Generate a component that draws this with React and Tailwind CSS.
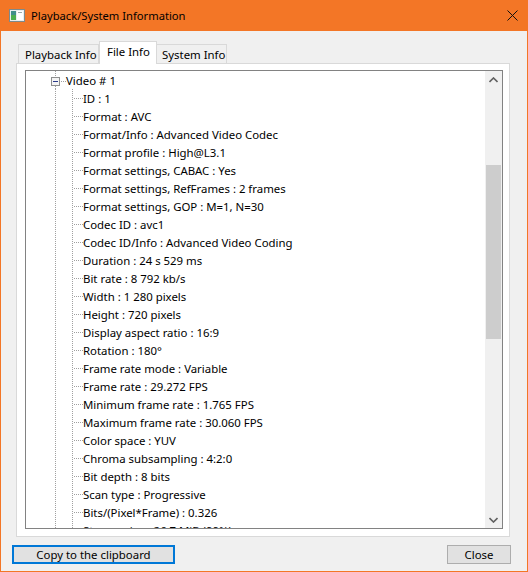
import React from "react";

const rows = [
  "ID : 1",
  "Format : AVC",
  "Format/Info : Advanced Video Codec",
  "Format profile : High@L3.1",
  "Format settings, CABAC : Yes",
  "Format settings, RefFrames : 2 frames",
  "Format settings, GOP : M=1, N=30",
  "Codec ID : avc1",
  "Codec ID/Info : Advanced Video Coding",
  "Duration : 24 s 529 ms",
  "Bit rate : 8 792 kb/s",
  "Width : 1 280 pixels",
  "Height : 720 pixels",
  "Display aspect ratio : 16:9",
  "Rotation : 180°",
  "Frame rate mode : Variable",
  "Frame rate : 29.272 FPS",
  "Minimum frame rate : 1.765 FPS",
  "Maximum frame rate : 30.060 FPS",
  "Color space : YUV",
  "Chroma subsampling : 4:2:0",
  "Bit depth : 8 bits",
  "Scan type : Progressive",
  "Bits/(Pixel*Frame) : 0.326",
  "Stream size : 26.7 MiB (99%)",
];

const dot = "#a0a0a0";

const AppIcon = () => (
  <svg width="16" height="13" viewBox="0 0 16 13" className="shrink-0">
    <rect x="0.5" y="0.5" width="15" height="12" fill="#e8eef0" stroke="#7d8a8c" />
    <rect x="2" y="2" width="5" height="9" fill="#3f8f8a" />
    <rect x="2" y="6" width="5" height="5" fill="#4caf50" />
    <rect x="8" y="2" width="6" height="9" fill="#ffffff" />
    <rect x="9" y="3" width="4" height="1" fill="#9aa" />
  </svg>
);

// tree connector for the parent node (minus box)
const ParentLines = () => (
  <svg width="40" height="18" className="shrink-0" shapeRendering="crispEdges">
    <line x1="29.5" y1="0" x2="29.5" y2="6" stroke={dot} strokeDasharray="1 1" />
    <line x1="29.5" y1="15" x2="29.5" y2="18" stroke={dot} strokeDasharray="1 1" />
    <rect x="25.5" y="6.5" width="8" height="8" fill="#f4f4f4" stroke="#8e8f8f" />
    <line x1="27" y1="10.5" x2="32" y2="10.5" stroke="#2a3a8a" />
    <line x1="35" y1="10.5" x2="40" y2="10.5" stroke={dot} strokeDasharray="1 1" />
  </svg>
);

// tree connector for child rows
const ChildLines = () => (
  <svg width="57" height="18" className="shrink-0" shapeRendering="crispEdges">
    <line x1="29.5" y1="0" x2="29.5" y2="18" stroke={dot} strokeDasharray="1 1" />
    <line x1="46.5" y1="0" x2="46.5" y2="18" stroke={dot} strokeDasharray="1 1" />
    <line x1="48" y1="9.5" x2="57" y2="9.5" stroke={dot} strokeDasharray="1 1" />
  </svg>
);

const Chevron = ({ down }) => (
  <svg width="9" height="6" viewBox="0 0 9 6" className={down ? "rotate-180" : ""}>
    <path d="M0.5 5 L4.5 1 L8.5 5" fill="none" stroke="#606060" strokeWidth="1.6" />
  </svg>
);

export default function App() {
  return (
    <div
      className="w-[528px] h-[572px] flex flex-col bg-[#f0f0f0] border-x border-b border-[#f37626] text-black text-[11.4px] whitespace-nowrap"
      style={{ fontFamily: '"Noto Sans", "Liberation Sans", sans-serif' }}
    >
      {/* Title bar */}
      <div className="h-[31px] -mx-px bg-[#f37626] flex items-center pl-[9px] pr-[10px] shrink-0">
        <AppIcon />
        <span className="ml-[6px] pt-px text-[11.2px]">Playback/System Information</span>
        <svg width="11" height="11" viewBox="0 0 11 11" className="ml-auto">
          <path d="M0.5 0.5 L10.5 10.5 M10.5 0.5 L0.5 10.5" stroke="#111" strokeWidth="1" />
        </svg>
      </div>

      <div className="flex-1 flex flex-col pt-[10px]">
        {/* Tabs */}
        <div className="flex items-end h-[22px] ml-[17px] relative z-10">
          <div className="w-[81px] h-[19px] border border-b-0 border-[#d9d9d9] bg-[#f0f0f0] flex items-center pl-[6px] pt-px">
            Playback Info
          </div>
          <div className="w-[58px] h-[23px] -mb-px border border-b-0 border-[#d9d9d9] bg-white flex items-center pl-[7px] pb-[2px]">
            File Info
          </div>
          <div className="w-[70px] h-[19px] border border-b-0 border-l-0 border-[#d9d9d9] bg-[#f0f0f0] flex items-center pl-[5px] pt-px">
            System Info
          </div>
        </div>

        {/* Tab panel */}
        <div className="ml-[15px] w-[494px] h-[474px] border border-[#d9d9d9] bg-white pl-[8px] pt-[6px]">
          <div className="w-[478px] h-[459px] border border-[#828282] flex overflow-hidden">
            <div className="flex-1 overflow-hidden">
              <div className="flex items-center h-[18px]">
                <ParentLines />
                <span className="pt-[2px]">Video # 1</span>
              </div>
              {rows.map((r, i) => (
                <div key={i} className="flex items-center h-[18px]">
                  <ChildLines />
                  <span className="pt-[2px]">{r}</span>
                </div>
              ))}
            </div>
            {/* Scrollbar */}
            <div className="w-[17px] shrink-0 bg-[#f0f0f0] flex flex-col">
              <div className="h-[17px] flex items-center justify-center">
                <Chevron />
              </div>
              <div className="flex-1 px-px">
                <div className="mt-[77px] h-[174px] bg-[#cdcdcd]" />
              </div>
              <div className="h-[17px] flex items-center justify-center">
                <Chevron down />
              </div>
            </div>
          </div>
        </div>

        {/* Buttons */}
        <div className="flex items-center mt-[8px] pl-[11px] pr-[16px]">
          <button className="w-[163px] h-[19px] border-2 border-[#0078d7] bg-[#e1e1e1] flex items-center justify-center leading-none">
            Copy to the clipboard
          </button>
          <button className="ml-auto w-[64px] h-[19px] border border-[#adadad] bg-[#e1e1e1] flex items-center justify-center leading-none">
            Close
          </button>
        </div>
      </div>
    </div>
  );
}
